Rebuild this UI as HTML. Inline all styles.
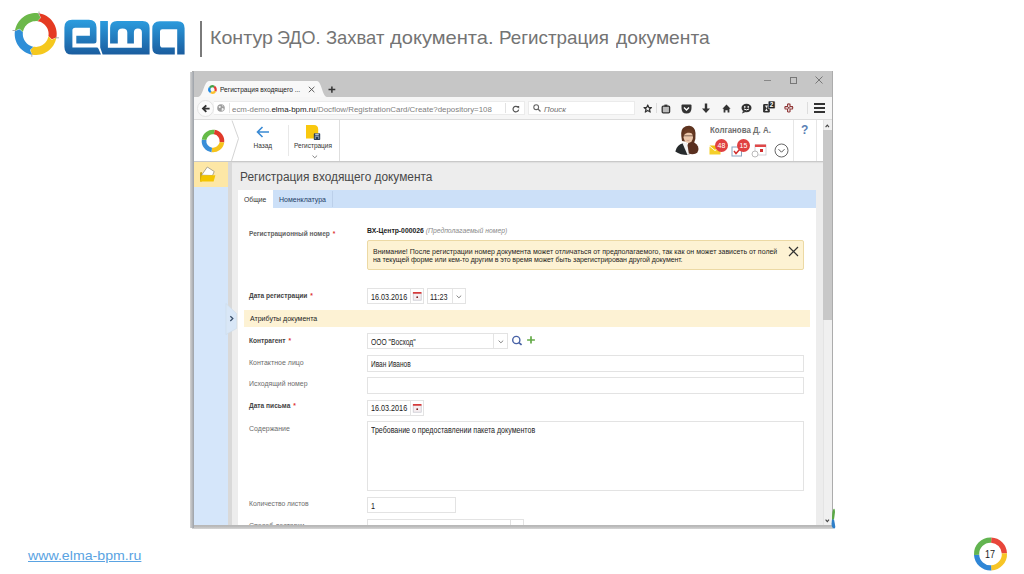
<!DOCTYPE html>
<html><head><meta charset="utf-8">
<style>
*{margin:0;padding:0;box-sizing:border-box}
html,body{width:1024px;height:574px;overflow:hidden;background:#fff;font-family:"Liberation Sans",sans-serif}
.a{position:absolute}
.t{position:absolute;white-space:nowrap;line-height:1}
svg{position:absolute;overflow:visible}
</style></head><body>
<!-- logo -->
<svg style="left:0;top:0" width="200" height="70" viewBox="0 0 200 70">
<defs><linearGradient id="eg" x1="0" y1="20" x2="0" y2="55" gradientUnits="userSpaceOnUse"><stop offset="0" stop-color="#2c9ddf"/><stop offset="1" stop-color="#1a5c9e"/></linearGradient></defs>
<g><path d="M38.84 13.24 L40.88 13.65 L42.87 14.26 L44.78 15.07 L46.61 16.06 L48.33 17.22 L49.93 18.55 L51.39 20.04 L52.69 21.66 L53.83 23.40 L54.79 25.24 L55.56 27.17 L56.14 29.17 L56.51 31.21 L56.69 33.29 L56.66 35.36 L56.42 37.43 L51.78 39.35 L48.43 36.11 L48.57 34.84 L48.59 33.56 L48.49 32.29 L48.25 31.03 L47.90 29.81 L47.42 28.62 L46.83 27.49 L46.14 26.42 L45.34 25.42 L44.44 24.51 L43.46 23.69 L42.40 22.98 L41.28 22.37 L40.10 21.87 L38.88 21.50 L37.63 21.25 L40.83 17.84Z" fill="#e53a22"/>
<path d="M56.34 37.86 L55.87 39.84 L55.21 41.76 L54.37 43.62 L53.35 45.38 L52.17 47.03 L50.83 48.56 L49.35 49.96 L47.75 51.20 L46.02 52.29 L44.21 53.20 L42.31 53.93 L40.35 54.48 L38.35 54.83 L36.32 54.99 L34.29 54.95 L32.27 54.72 L30.35 50.08 L33.59 46.73 L34.83 46.87 L36.08 46.89 L37.33 46.80 L38.56 46.58 L39.76 46.24 L40.93 45.79 L42.04 45.23 L43.10 44.57 L44.09 43.80 L45.00 42.94 L45.82 42.00 L46.54 40.99 L47.17 39.91 L47.69 38.77 L48.09 37.59 L48.38 36.37 L51.67 39.69Z" fill="#f5c81e"/>
<path d="M31.84 54.64 L29.90 54.18 L28.02 53.55 L26.21 52.73 L24.48 51.75 L22.85 50.61 L21.34 49.32 L19.95 47.89 L18.71 46.34 L17.62 44.68 L16.69 42.92 L15.93 41.09 L15.35 39.19 L14.95 37.24 L14.74 35.26 L14.71 33.28 L14.87 31.30 L19.44 29.21 L22.91 32.34 L22.81 33.56 L22.82 34.78 L22.95 35.99 L23.20 37.19 L23.56 38.35 L24.02 39.48 L24.59 40.56 L25.26 41.58 L26.03 42.54 L26.88 43.41 L27.81 44.20 L28.81 44.90 L29.87 45.51 L30.98 46.01 L32.14 46.40 L33.33 46.68 L30.01 49.97Z" fill="#2f8fd8"/>
<path d="M14.94 30.86 L15.34 28.87 L15.93 26.92 L16.71 25.04 L17.66 23.25 L18.79 21.55 L20.07 19.98 L21.50 18.53 L23.06 17.23 L24.74 16.08 L26.53 15.11 L28.40 14.31 L30.34 13.70 L32.32 13.27 L34.34 13.04 L36.38 13.01 L38.40 13.17 L40.49 17.74 L37.36 21.21 L36.12 21.11 L34.87 21.13 L33.63 21.27 L32.40 21.53 L31.21 21.91 L30.07 22.40 L28.97 23.00 L27.94 23.70 L26.98 24.50 L26.10 25.38 L25.31 26.35 L24.62 27.39 L24.03 28.50 L23.56 29.65 L23.19 30.85 L22.95 32.07 L19.54 28.87Z" fill="#6cb84a"/></g>
<g stroke="#9a9a9a" stroke-width="0.8"><path d="M39 11.5V15.5"/><path d="M59 37.8H55"/><path d="M31.8 56.8V52.8"/><path d="M12.5 30.5H16.5"/></g>
<path fill="url(#eg)" d="M72.1 19.8H88.8Q96.5 19.8 96.5 27.5V41Q96.5 43.5 94 43.5H76.3V35.8H89.9V27.8H75.2Q72.4 27.8 72.4 30.6V47.6H96.8Q98 47.6 98.6 49L101 54.6H72.1Q64.4 54.6 64.4 46.9V27.5Q64.4 19.8 72.1 19.8Z"/>
<path fill="url(#eg)" d="M100.2 21.1H107.9V47.8H141.9V32.4Q141.9 28.4 137.9 28.4Q133.9 28.4 133.9 32.4V43.5H127.3V32.4Q127.3 28.4 122.55 28.4Q117.8 28.4 117.8 32.4V43.5H110.1V28.1Q110.1 21.1 117.1 21.1H142.6Q149.6 21.1 149.6 28.1V54.6H102.6L100.2 47.6Z"/>
<path fill="url(#eg)" d="M159.9 21.2H177.6Q184.6 21.2 184.6 28.2V54.6H177.2V29.2H162.2Q160 29.2 160 31.4V44.8Q160 47.6 162.8 47.6H174.8V54.6H159.3Q152.3 54.6 152.3 47.6V28.9Q152.3 21.2 159.9 21.2Z"/>
</svg>
<!-- page number -->
<svg style="left:970px;top:534px" width="40" height="40" viewBox="0 0 40 40">
<g fill="none" stroke-width="5.2">
<path d="M21.2 6.1A13.9 13.9 0 0 1 34.4 19.3" stroke="#e8463a"/>
<path d="M34.4 19.3A13.9 13.9 0 0 1 21.2 33.9" stroke="#f7c526"/>
<path d="M21.2 33.9A13.9 13.9 0 0 1 6.6 20.8" stroke="#2f86d6"/>
<path d="M6.6 20.8A13.9 13.9 0 0 1 21.2 6.1" stroke="#62b450"/>
</g></svg>
<div class="t" style="left:984.6px;top:549.6px;font-size:10px;color:#1a1a1a;transform-origin:0 0;transform:scaleX(0.9)">17</div>
<!-- slide header -->
<div class="a" style="left:200px;top:21px;width:2px;height:36px;background:#7a7a7a"></div>
<div class="t tw" id="w0" style="left:209.5px;top:28px;font-size:19px;color:#747474;transform-origin:0 0;transform:scaleX(1.034)">Контур</div>
<div class="t tw" id="w1" style="left:277.3px;top:28px;font-size:19px;color:#747474;transform-origin:0 0;transform:scaleX(0.947)">ЭДО.</div>
<div class="t tw" id="w2" style="left:325.8px;top:28px;font-size:19px;color:#747474;transform-origin:0 0;transform:scaleX(0.968)">Захват</div>
<div class="t tw" id="w3" style="left:389.8px;top:28px;font-size:19px;color:#747474;transform-origin:0 0;transform:scaleX(1.058)">документа.</div>
<div class="t tw" id="w4" style="left:499.4px;top:28px;font-size:19px;color:#747474;transform-origin:0 0;transform:scaleX(0.99)">Регистрация</div>
<div class="t tw" id="w5" style="left:616.4px;top:28px;font-size:19px;color:#747474;transform-origin:0 0;transform:scaleX(1.011)">документа</div>


<!-- browser frame -->
<div class="a" id="frame" style="left:191.5px;top:71px;width:641.5px;height:454px;background:#acacac"></div>
<div class="a" style="left:191.5px;top:525px;width:641.5px;height:4px;background:linear-gradient(#b6b6b6,#bcbcbc 40%,#d6d6d6)"></div>
<div class="a" style="left:190px;top:72px;width:4px;height:456px;background:linear-gradient(to right,#d4d4d4,#b8babd 50%,#9ca1a8)"></div>
<div class="a" style="left:193.5px;top:71px;width:638px;height:26px;background:#c6c6c6"></div>
<!-- tab -->
<svg style="left:194px;top:71px" width="140" height="26"><path d="M4 26C9 26 10 10 15 10H123C127.5 10 128.5 26 133 26Z" fill="#f8f8f8"/></svg>
<svg style="left:207.5px;top:84.5px" width="9" height="9" viewBox="0 0 24 24" transform="rotate(-60)"><circle cx="12" cy="12" r="8.5" fill="none" stroke="#e53935" stroke-width="6" stroke-dasharray="13.35 40.05" stroke-dashoffset="0"/><circle cx="12" cy="12" r="8.5" fill="none" stroke="#fbc02d" stroke-width="6" stroke-dasharray="13.35 40.05" stroke-dashoffset="-13.35"/><circle cx="12" cy="12" r="8.5" fill="none" stroke="#1e88e5" stroke-width="6" stroke-dasharray="13.35 40.05" stroke-dashoffset="-26.7"/><circle cx="12" cy="12" r="8.5" fill="none" stroke="#43a047" stroke-width="6" stroke-dasharray="13.35 40.05" stroke-dashoffset="-40.05"/></svg>
<div class="t" style="left:220px;top:86px;font-size:7px;color:#1a1a1a;transform-origin:0 0;transform:scaleX(0.94)">Регистрация входящего ...</div>
<svg style="left:307.5px;top:85.5px" width="8" height="8"><path d="M0.8 0.8L6.4 6.2M6.4 0.8L0.8 6.2" stroke="#505050" stroke-width="0.9"/></svg>
<svg style="left:327.5px;top:85.5px" width="8" height="8"><path d="M3.9 0.5V6.8M0.5 3.6H7.3" stroke="#333" stroke-width="1.5"/></svg>
<!-- window controls -->
<div class="a" style="left:764px;top:80px;width:7px;height:1px;background:#888"></div>
<div class="a" style="left:790px;top:77px;width:7px;height:7px;border:1px solid #777"></div>
<svg style="left:815px;top:76px" width="8" height="8"><path d="M0.5 0.5L7.5 7.5M7.5 0.5L0.5 7.5" stroke="#777" stroke-width="1"/></svg>

<!-- toolbar -->
<div class="a" style="left:194px;top:97px;width:638px;height:23px;background:#f6f6f6;border-bottom:1px solid #dcdcdc"></div>
<div class="a" style="left:196.5px;top:99.6px;width:17px;height:17px;border-radius:9px;background:#fbfbfb;border:1px solid #e3e3e3"></div>
<svg style="left:200.5px;top:103.8px" width="10" height="10"><path d="M2.2 4.6H8.6M5.3 1.3L2 4.6L5.3 7.9" fill="none" stroke="#333" stroke-width="1.9"/></svg>
<div class="a" style="left:214px;top:101px;width:311px;height:14px;background:#fff;border:1px solid #ebebeb;border-left:none"></div>
<svg style="left:217px;top:104.3px" width="8" height="8"><circle cx="4" cy="4" r="3.8" fill="#9e9e9e"/><path d="M1.5 2.5Q3 1.5 4 2.8Q3.5 4.2 2.2 4Z M4.8 4.2Q6.5 3.8 6.8 5.5Q5.8 7.2 4.6 6.5Z M5 1Q6.2 1.2 6.6 2.2L5.6 2.4Z" fill="#f2f2f2"/></svg>
<div class="a" style="left:229px;top:103px;width:1px;height:10px;background:#e2e2e2"></div>
<div class="t" style="left:232px;top:105.8px;font-size:7.9px;color:#808080">ecm-demo.<span style="color:#222">elma-bpm.ru</span>/Docflow/RegistrationCard/Create?depository=108</div>
<div class="a" style="left:505px;top:103px;width:1px;height:10px;background:#e2e2e2"></div>
<svg style="left:511.5px;top:105px" width="8" height="8"><path d="M6 2.3A2.8 2.8 0 1 0 6.6 4.6" fill="none" stroke="#555" stroke-width="1.2"/><path d="M4.4 1H7.2V3.8Z" fill="#555"/></svg>
<div class="a" style="left:528px;top:101px;width:107px;height:14px;background:#fff;border:1px solid #ebebeb"></div>
<svg style="left:533px;top:104px" width="8" height="8"><circle cx="3.2" cy="3.2" r="2.4" fill="none" stroke="#666" stroke-width="1.1"/><path d="M5 5L7.5 7.5" stroke="#666" stroke-width="1.3"/></svg>
<div class="t" style="left:544px;top:105.5px;font-size:7.8px;font-style:italic;color:#6c6c6c">Поиск</div>
<!-- toolbar icons -->
<svg style="left:643px;top:103.5px" width="9.5" height="9.5" viewBox="0 0 24 24"><path d="M12 2.5L14.8 9H21.5L16.2 13.2L18.2 20.5L12 16.2L5.8 20.5L7.8 13.2L2.5 9H9.2Z" fill="none" stroke="#333" stroke-width="3" stroke-linejoin="round"/></svg>
<div class="a" style="left:656px;top:103px;width:1px;height:10px;background:#ddd"></div>
<svg style="left:660.5px;top:104px" width="10" height="10"><rect x="1.2" y="2.2" width="7.4" height="6.6" rx="1" fill="#bbb" stroke="#333" stroke-width="1.3"/><rect x="3.4" y="0.6" width="3" height="2" fill="#333"/></svg>
<svg style="left:680.5px;top:104px" width="11" height="10"><path d="M0.5 1.5Q0.5 0.5 1.5 0.5H9.5Q10.5 0.5 10.5 1.5V4Q10.5 9.5 5.5 9.5Q0.5 9.5 0.5 4Z" fill="#333"/><path d="M3 3.5L5.5 6L8 3.5" fill="none" stroke="#fff" stroke-width="1.4"/></svg>
<svg style="left:701px;top:103px" width="10" height="11"><path d="M5 0.5V6" stroke="#333" stroke-width="2.4"/><path d="M1 5.5H9L5 10Z" fill="#333"/></svg>
<svg style="left:721.5px;top:103.5px" width="9" height="9"><path d="M4.5 0.6L8.6 4.8H7.4V8.6H5.6V6.2H3.4V8.6H1.6V4.8H0.4Z" fill="#333"/></svg>
<svg style="left:741px;top:103px" width="11" height="11"><ellipse cx="5.5" cy="5" rx="5" ry="4.2" fill="#333"/><path d="M2 8L1 10.5L4.5 9Z" fill="#333"/><rect x="3" y="3.2" width="1.5" height="1.5" fill="#fff"/><rect x="6.5" y="3.2" width="1.5" height="1.5" fill="#fff"/><path d="M3 6Q5.5 7.8 8 6" stroke="#fff" fill="none"/></svg>
<svg style="left:762px;top:100px" width="15" height="14"><rect x="1.1" y="4" width="6.7" height="8.5" rx="1.2" fill="#2e2e2e"/><path d="M3 5.6H5.9L4.45 8.3L5.9 11H3L4.45 8.3Z" fill="#eee"/><rect x="6.2" y="1" width="6.9" height="7.7" rx="1" fill="#222" stroke="#f6f6f6" stroke-width="0.6"/><text x="9.65" y="7.3" font-size="6.5" font-family="Liberation Sans" font-weight="bold" fill="#fff" text-anchor="middle">2</text></svg>
<svg style="left:784px;top:103px" width="10" height="10"><path d="M3.6 1.2Q4.8 0.6 6 1.2V3.6H8.4Q9.2 4.8 8.4 6H6V8.6Q4.8 9.4 3.6 8.6V6H1.2Q0.4 4.8 1.2 3.6H3.6Z" fill="none" stroke="#8e3434" stroke-width="1.1"/><circle cx="4.8" cy="4.8" r="0.9" fill="#7a2a2a"/></svg>
<div class="a" style="left:807px;top:102px;width:1px;height:12px;background:#ddd"></div>
<div class="a" style="left:814px;top:103px;width:11px;height:2px;background:#333"></div>
<div class="a" style="left:814px;top:107px;width:11px;height:2px;background:#333"></div>
<div class="a" style="left:814px;top:111px;width:11px;height:2px;background:#333"></div>

<!-- content -->
<div class="a" id="app" style="left:0;top:0;width:1024px;height:574px;clip-path:inset(120px 192px 49px 194px)">
<div class="a" style="left:194px;top:120px;width:638px;height:405px;background:#ededed"></div>
<!-- header -->
<div class="a" style="left:194px;top:120px;width:629px;height:42px;background:#fff;border-bottom:1px solid #c9c9c9;box-shadow:0 1px 1px rgba(0,0,0,0.05)"></div>
<svg style="left:201.2px;top:128.8px" width="24" height="24" viewBox="0 0 24 24" transform="rotate(8)">
<g fill="none" stroke-width="4.6">
<path d="M12 3A9 9 0 0 1 21 12" stroke="#e03a2a"/>
<path d="M21 12A9 9 0 0 1 12 21" stroke="#f6c41c"/>
<path d="M12 21A9 9 0 0 1 3 12" stroke="#3a8ed8"/>
<path d="M3 12A9 9 0 0 1 12 3" stroke="#66bb48"/>
</g></svg>
<svg style="left:230px;top:120px" width="12" height="42"><path d="M2 0.5L8.5 18.5L1.5 41" fill="none" stroke="#d4d4d4" stroke-width="1"/></svg>
<svg style="left:256px;top:126px" width="14" height="12"><path d="M1.5 6H13M6.5 1L1.5 6L6.5 11" fill="none" stroke="#3a8ad4" stroke-width="1.6"/></svg>
<div class="t" style="left:253.5px;top:143.3px;font-size:6.5px;color:#333">Назад</div>
<div class="a" style="left:288px;top:125px;width:1px;height:31px;background:#e8e8e8"></div>
<svg style="left:305px;top:124px" width="17" height="17"><path d="M1 1H9Q13.2 1 13.2 5.5V14.6H1Z" fill="#f9c80e"/><rect x="8.8" y="9.2" width="6.4" height="6.8" rx="0.8" fill="#2c3e58"/><rect x="10.2" y="9.6" width="3.6" height="1.8" fill="#b8c4d4"/><path d="M10.3 15V12.5H13.7V15" fill="none" stroke="#9fb2c8" stroke-width="0.8"/></svg>
<div class="t" style="left:294px;top:143.3px;font-size:6.5px;color:#333">Регистрация</div>
<svg style="left:311.7px;top:154.5px" width="6" height="4"><path d="M0.5 0.6L2.8 2.8L5.1 0.6" fill="none" stroke="#777" stroke-width="0.9"/></svg>
<div class="a" style="left:339px;top:120px;width:1px;height:41px;background:#dedede"></div>
<!-- user -->
<svg style="left:674px;top:125px" width="27" height="31" viewBox="0 0 27 31">
<path d="M8 16Q6 6 9 3Q12 0.5 15.5 0.8Q21 1.5 21.5 8Q22 14 20 18Z" fill="#5e3420"/>
<path d="M1.3 26.5Q3 19.5 9 18.3L12.5 18.5L15.5 30Q7 30.5 1.3 26.5Z" fill="#262a2c"/>
<path d="M8.5 18.2L12.5 17.5L16.5 29.5L13.5 30Z" fill="#f2f2f2"/>
<path d="M15 16.5Q21 16 24 21.5Q25.5 26 22 28.6Q18 30 14.8 28.5L13.5 20Z" fill="#5a3020"/>
<ellipse cx="14.3" cy="12.2" rx="4.7" ry="5.8" fill="#ebc6aa"/>
<path d="M9.2 10Q9 4 14.8 4Q20.5 4.2 20 11Q18.5 7 13.5 7.8Q10.5 8.5 9.2 11Z" fill="#6a3b24"/>
<path d="M9.8 10.8H19" stroke="#5a4036" stroke-width="0.7"/>
<path d="M12.5 15.2Q14 15.8 15.5 15.2" stroke="#c08a7a" stroke-width="0.6" fill="none"/>
</svg>
<div class="t" style="left:709.8px;top:125.5px;font-size:9px;font-weight:bold;color:#6e6e6e;transform-origin:0 0;transform:scaleX(0.875)">Колганова Д. А.</div>
<svg style="left:709px;top:145px" width="13" height="10"><path d="M0.5 1.5L6 6L11.5 1.5V9.5H0.5Z" fill="#f5cf2a"/><path d="M0.5 0.5H11.5L6 5Z" fill="#f0c010"/></svg>
<div class="a" style="left:715px;top:139px;width:13px;height:13px;border-radius:7px;background:#e04040"></div>
<div class="t" style="left:715px;top:142px;width:13px;text-align:center;font-size:7px;color:#fff">48</div>
<svg style="left:731px;top:145px" width="12" height="12"><rect x="1" y="2" width="9.5" height="9" fill="none" stroke="#8aa4c0" stroke-width="1"/><path d="M3 6L5 8.5L9 4" fill="none" stroke="#d03030" stroke-width="1.5"/></svg>
<div class="a" style="left:737px;top:139px;width:13px;height:13px;border-radius:7px;background:#e04040"></div>
<div class="t" style="left:737px;top:142px;width:13px;text-align:center;font-size:7px;color:#fff">15</div>
<svg style="left:751px;top:144px" width="16" height="13"><rect x="4" y="1" width="11" height="10" fill="#fff" stroke="#c8c8d0" stroke-width="0.8"/><rect x="4" y="0.5" width="11" height="2.5" fill="#e04848"/><rect x="9" y="5" width="3" height="3" fill="#d03030"/><circle cx="4" cy="10" r="3" fill="#fff" stroke="#aaa" stroke-width="0.8"/></svg>
<svg style="left:774px;top:143px" width="15" height="15"><circle cx="7.5" cy="7.5" r="6.5" fill="none" stroke="#666" stroke-width="1"/><path d="M4.5 6.2L7.5 9.2L10.5 6.2" fill="none" stroke="#555" stroke-width="1"/></svg>
<div class="a" style="left:793px;top:120px;width:1px;height:41px;background:#e6e6e6"></div>
<div class="t" style="left:801px;top:124px;font-size:12px;font-weight:bold;color:#5b7fb5">?</div>
<div class="a" style="left:816px;top:120px;width:1px;height:41px;background:#e6e6e6"></div>
<!-- scrollbar -->
<div class="a" style="left:823px;top:120px;width:9px;height:405px;background:#f0f0f0;border-left:1px solid #e4e4e4"></div>
<div class="a" style="left:823px;top:130px;width:9px;height:190px;background:#c8c8c8"></div>
<svg style="left:824.5px;top:123.5px" width="5" height="4"><path d="M0.6 3.2L2.3 1.2L4 3.2" fill="none" stroke="#444" stroke-width="1.1"/></svg>
<svg style="left:824.5px;top:518.8px" width="5" height="4"><path d="M0.6 0.6L2.3 2.6L4 0.6" fill="none" stroke="#444" stroke-width="1.1"/></svg>
<!-- left panel -->
<div class="a" style="left:194px;top:162px;width:34px;height:25px;background:#fde7a6"></div>
<svg style="left:199px;top:165px" width="18" height="18"><path d="M1 7.5L3 7V16.4H1Z" fill="#d2aa10"/><path d="M2.5 10.2L8.3 2L15.2 6.5L13.5 10.5Z" fill="#fff" stroke="#8d8676" stroke-width="0.7"/><path d="M1 16.4L2.8 10.2H16.4L14.6 16.4Z" fill="#f3c500"/></svg>
<div class="a" style="left:194px;top:187px;width:34px;height:338px;background:#d5e6fa"></div>
<div class="a" style="left:228px;top:162px;width:4px;height:363px;background:#d9d9d9"></div>
<svg style="left:226px;top:303px" width="12" height="32"><path d="M0 0.5L10.5 10.5V25.5L0 31.5Z" fill="#d9e7f7" stroke="#cfdbe8" stroke-width="0.6"/><path d="M4.3 13.2L6.8 15.6L4.3 18" fill="none" stroke="#3a4f6a" stroke-width="1.3"/></svg>
<!-- page title -->
<div class="t" style="left:240px;top:171px;font-size:12px;color:#484848;transform-origin:0 0;transform:scaleX(0.988)">Регистрация входящего документа</div>
<!-- card -->
<div class="a" style="left:238px;top:190px;width:578px;height:340px;background:#fff"></div>
<div class="a" style="left:238px;top:190px;width:578px;height:18px;background:#cce0f8"></div>
<div class="a" style="left:238px;top:190px;width:35px;height:18px;background:#fff"></div>
<div class="t" style="left:244px;top:196.5px;font-size:6.8px;color:#333">Общие</div>
<div class="t" style="left:279px;top:196px;font-size:7px;color:#233d66">Номенклатура</div>
<div class="a" style="left:332px;top:191px;width:1px;height:16px;background:#bcd0ea"></div>
<!-- form -->
<div class="t" style="left:249px;top:231px;font-size:6.55px;font-weight:bold;color:#626262">Регистрационный номер <span style="color:#d33;margin-left:1px">*</span></div>
<div class="t" style="left:367px;top:228px;font-size:6.8px;font-weight:bold;color:#222">ВХ-Центр-000026 <span style="font-weight:normal;font-style:italic;color:#8a8a8a">(Предполагаемый номер)</span></div>
<div class="a" style="left:367px;top:240px;width:437px;height:30px;background:#fdf2d3;border:1px solid #ecd9a4;border-radius:2px"></div>
<div class="t" style="left:373px;top:248px;font-size:7px;color:#1e1e1e;line-height:8px">Внимание! После регистрации номер документа может отличаться от предполагаемого, так как он может зависеть от полей<br><span style="letter-spacing:-0.08px">на текущей форме или кем-то другим в это время может быть зарегистрирован другой документ.</span></div>
<svg style="left:788px;top:246px" width="11" height="11"><path d="M1 1L10 10M10 1L1 10" stroke="#333" stroke-width="1.2"/></svg>

<div class="t" style="left:249px;top:293px;font-size:6.6px;font-weight:bold;color:#444">Дата регистрации <span style="color:#d33;margin-left:1px">*</span></div>
<div class="a" style="left:367px;top:288px;width:57px;height:16px;background:#fff;border:1px solid #e3e3e3"></div>
<div class="a" style="left:410px;top:288px;width:14px;height:16px;border:1px solid #e3e3e3"></div>
<svg style="left:412px;top:291px" width="10" height="10"><rect x="1.2" y="2.2" width="8" height="7" fill="#f6eef0" stroke="#c4c4cc" stroke-width="0.7"/><rect x="0.9" y="1" width="8.6" height="1.7" fill="#d83a3a"/><circle cx="5.2" cy="6.2" r="0.9" fill="#7a2020"/></svg>
<div class="t" style="left:371px;top:292.9px;font-size:8.5px;color:#1a1a1a;transform-origin:0 0;transform:scaleX(0.85)">16.03.2016</div>
<div class="a" style="left:427px;top:288px;width:39px;height:16px;background:#fff;border:1px solid #e3e3e3"></div>
<div class="a" style="left:452px;top:289px;width:1px;height:14px;background:#e4e4e4"></div>
<div class="t" style="left:430px;top:292.9px;font-size:8.5px;color:#1a1a1a;transform-origin:0 0;transform:scaleX(0.85)">11:23</div>
<svg style="left:456px;top:294.5px" width="6" height="4"><path d="M0.6 0.6L2.9 2.8L5.2 0.6" fill="none" stroke="#777" stroke-width="0.9"/></svg>

<div class="a" style="left:244px;top:310px;width:566px;height:17px;background:#fdf2d4"></div>
<div class="t" style="left:250px;top:315px;font-size:7px;color:#222">Атрибуты документа</div>

<div class="t" style="left:249px;top:338px;font-size:6.6px;font-weight:bold;color:#444">Контрагент <span style="color:#d33;margin-left:1px">*</span></div>
<div class="a" style="left:367px;top:333px;width:141px;height:16px;background:#fff;border:1px solid #e3e3e3"></div>
<div class="a" style="left:493px;top:334px;width:1px;height:14px;background:#e4e4e4"></div>
<svg style="left:497.8px;top:339.8px" width="6" height="4"><path d="M0.6 0.6L2.9 2.8L5.2 0.6" fill="none" stroke="#777" stroke-width="0.9"/></svg>
<div class="t" style="left:371px;top:337.5px;font-size:8.5px;color:#1a1a1a;transform-origin:0 0;transform:scaleX(0.79)">ООО "Восход"</div>
<svg style="left:511px;top:335px" width="12" height="12"><circle cx="5.3" cy="5" r="3.6" fill="none" stroke="#4862a6" stroke-width="1.4"/><path d="M7.8 7.6L10.6 9.9" stroke="#4862a6" stroke-width="1.8"/></svg>
<svg style="left:526px;top:335px" width="10" height="10"><path d="M5 1.3V8.6M1.1 5H8.9" stroke="#64aa48" stroke-width="1.7"/></svg>

<div class="t" style="left:249px;top:359px;font-size:7px;color:#6c6c6c">Контактное лицо</div>
<div class="a" style="left:367px;top:355px;width:437px;height:17px;background:#fff;border:1px solid #e3e3e3"></div>
<div class="t" style="left:371px;top:360.2px;font-size:8.5px;color:#1a1a1a;transform-origin:0 0;transform:scaleX(0.77)">Иван Иванов</div>

<div class="t" style="left:249px;top:381px;font-size:6.9px;color:#6c6c6c">Исходящий номер</div>
<div class="a" style="left:367px;top:377px;width:437px;height:17px;background:#fff;border:1px solid #e3e3e3"></div>

<div class="t" style="left:249px;top:403px;font-size:6.6px;font-weight:bold;color:#444">Дата письма <span style="color:#d33;margin-left:1px">*</span></div>
<div class="a" style="left:367px;top:400px;width:57px;height:16px;background:#fff;border:1px solid #e3e3e3"></div>
<div class="a" style="left:410px;top:400px;width:14px;height:16px;border:1px solid #e3e3e3"></div>
<svg style="left:412px;top:403px" width="10" height="10"><rect x="1.2" y="2.2" width="8" height="7" fill="#f6eef0" stroke="#c4c4cc" stroke-width="0.7"/><rect x="0.9" y="1" width="8.6" height="1.7" fill="#d83a3a"/><circle cx="5.2" cy="6.2" r="0.9" fill="#7a2020"/></svg>
<div class="t" style="left:371px;top:403.9px;font-size:8.5px;color:#1a1a1a;transform-origin:0 0;transform:scaleX(0.85)">16.03.2016</div>

<div class="t" style="left:249px;top:425px;font-size:7px;color:#6c6c6c">Содержание</div>
<div class="a" style="left:367px;top:421px;width:437px;height:70px;background:#fff;border:1px solid #e3e3e3"></div>
<div class="t" style="left:371px;top:425.8px;font-size:8.5px;color:#1a1a1a;transform-origin:0 0;transform:scaleX(0.83)">Требование о предоставлении пакета документов</div>

<div class="t" style="left:249px;top:501px;font-size:6.75px;color:#6c6c6c">Количество листов</div>
<div class="a" style="left:367px;top:497px;width:89px;height:16px;background:#fff;border:1px solid #e3e3e3"></div>
<div class="t" style="left:371px;top:501.8px;font-size:8.5px;color:#1a1a1a;transform-origin:0 0;transform:scaleX(0.85)">1</div>

<div class="t" style="left:249px;top:521.8px;font-size:7px;color:#6c6c6c">Способ доставки</div>
<div class="a" style="left:367px;top:519px;width:157px;height:16px;background:#fff;border:1px solid #e3e3e3"></div>
<div class="a" style="left:510px;top:520px;width:1px;height:14px;background:#e0e0e0"></div>
</div>

<svg style="left:830px;top:506px" width="8" height="24"><path d="M2 14Q1.8 6 3.5 3Q5 2 5 6Q4.5 10 4 13.5Z" fill="#5aa845"/><path d="M2 13.5L4 13.5Q5 18 5.3 21Q5 23 3.5 22.5Q1.5 21 1.5 18Z" fill="#2f7fc8"/></svg>
<!-- footer -->
<div class="t" style="left:27.8px;top:549.3px;font-size:13px;color:#5aa3e2;text-decoration:underline;transform-origin:0 0;transform:scaleX(1.09)">www.elma-bpm.ru</div>
</body></html>
